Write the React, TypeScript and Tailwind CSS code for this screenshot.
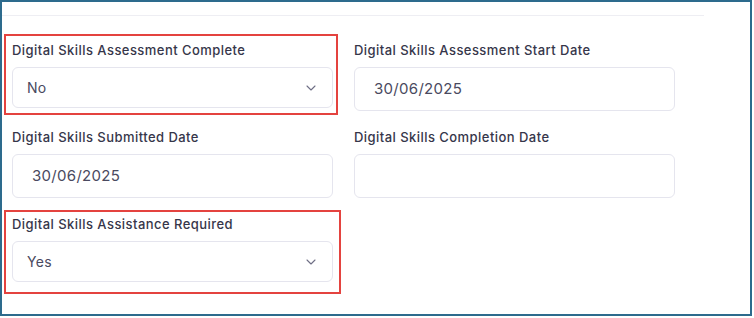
import React from 'react';
import { ChevronDown } from 'lucide-react';

type FieldProps = {
  label: string;
  children: React.ReactNode;
  highlight?: string;
};

const Field = ({ label, children, highlight }: FieldProps) => (
  <div className="relative flex flex-col gap-2">
    <label className="text-[13px] font-medium leading-[18px] tracking-[0.45px] text-[#36364a]">{label}</label>
    {children}
    {highlight && <div className={`pointer-events-none absolute border-2 border-[#e4433f] ${highlight}`} />}
  </div>
);

const SelectBox = ({ value }: { value: string }) => (
  <div className="flex h-[41px] items-center justify-between rounded-md border border-[#e5e5ee] bg-white pl-[14px] pr-[13px]">
    <span className="text-sm tracking-[0.3px] text-[#4a4a60]">{value}</span>
    <ChevronDown size={16} strokeWidth={1.6} className="text-[#6e6e84]" />
  </div>
);

const DateBox = ({ value }: { value?: string }) => (
  <div className="flex h-[44px] items-center rounded-md border border-[#e5e5ee] bg-white px-[19px]">
    <span className="text-[15px] tracking-[0.3px] text-[#4a4a60]">{value}</span>
  </div>
);

export default function App() {
  return (
    <div className="h-[318px] w-[754px] bg-white" style={{ fontFamily: 'Inter, "Noto Sans", sans-serif' }}>
      <div className="h-[316px] w-[752px] border-2 border-[#2d6b8d] bg-white">
        <div className="h-[14px] w-[702px] border-b border-[#eeeef3]" />
        <div className="grid grid-cols-[321px_321px] gap-x-[21px] gap-y-[17px] pl-[10px] pt-[25px]">
          <Field label="Digital Skills Assessment Complete" highlight="-left-[8px] -top-[7px] -right-[5px] -bottom-[4px]">
            <SelectBox value="No" />
          </Field>
          <Field label="Digital Skills Assessment Start Date">
            <DateBox value="30/06/2025" />
          </Field>
          <Field label="Digital Skills Submitted Date">
            <DateBox value="30/06/2025" />
          </Field>
          <Field label="Digital Skills Completion Date">
            <DateBox />
          </Field>
          <Field label="Digital Skills Assistance Required" highlight="-left-[8px] -top-[5px] -right-[8px] -bottom-[12px]">
            <SelectBox value="Yes" />
          </Field>
        </div>
      </div>
    </div>
  );
}
